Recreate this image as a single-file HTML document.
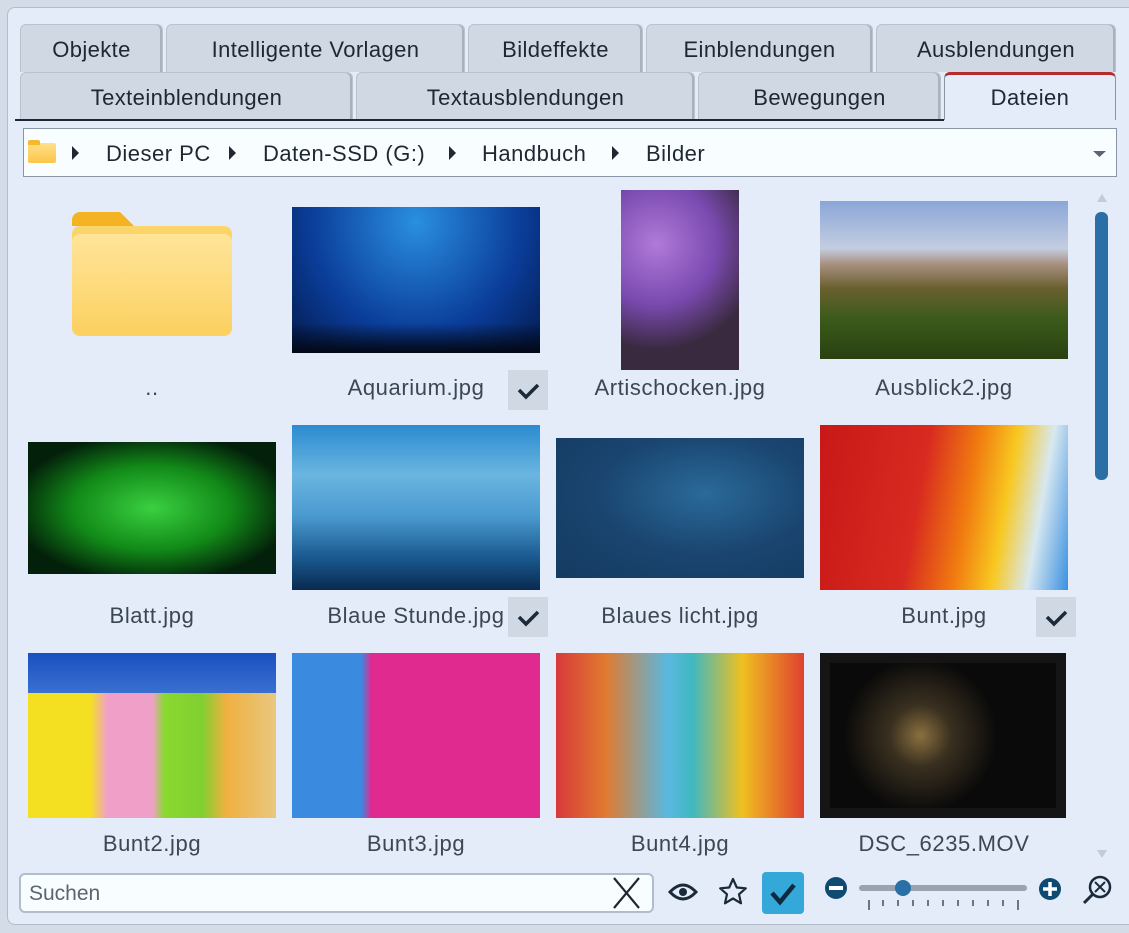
<!DOCTYPE html>
<html><head><meta charset="utf-8"><style>
*{margin:0;padding:0;box-sizing:border-box}
body{width:1129px;height:933px;background:#d3dce7;position:relative;overflow:hidden;font-family:"Liberation Sans","DejaVu Sans",sans-serif;color:#1f2733}
.abs{position:absolute}
#panel{left:7px;top:7px;width:1130px;height:918px;background:#e3ecf8;border:1px solid #b3bcc8;border-radius:8px}
.tab{position:absolute;background:#cfd8e3;border:1px solid #b9c2cd;border-bottom:none;border-radius:6px 6px 0 0;font-size:22px;letter-spacing:0.4px;text-align:center;line-height:50px;height:48px;color:#1f2733;box-shadow:inset -2px 0 0 #a8b1bc}
.lbl{position:absolute;font-size:22px;letter-spacing:0.6px;color:#3c4654;text-align:center;width:264px}
.img{position:absolute}
.badge{position:absolute;width:40px;height:40px;background:#cfd8e3}
</style></head><body>
<div id="panel" class="abs"></div>
<div class="tab" style="left:20px;top:24px;width:143px">Objekte</div>
<div class="tab" style="left:166px;top:24px;width:299px">Intelligente Vorlagen</div>
<div class="tab" style="left:468px;top:24px;width:175px">Bildeffekte</div>
<div class="tab" style="left:646px;top:24px;width:227px">Einblendungen</div>
<div class="tab" style="left:876px;top:24px;width:240px">Ausblendungen</div>
<div class="tab" style="left:20px;top:72px;width:333px">Texteinblendungen</div>
<div class="tab" style="left:356px;top:72px;width:339px">Textausblendungen</div>
<div class="tab" style="left:698px;top:72px;width:243px">Bewegungen</div>
<div class="tab" style="left:944px;top:72px;width:172px;background:#e3ecf8;border-top:3px solid #b62b2b;line-height:46px;box-shadow:none;border-color:#8a96a4;border-top-color:#b62b2b">Dateien</div>
<div class="abs" style="left:15px;top:119px;width:929px;height:2px;background:#1f2733"></div>
<div class="abs" style="left:23px;top:128px;width:1094px;height:49px;background:#f8fdff;border:1px solid #8a96a4"></div>
<div class="abs" style="left:28px;top:143px;width:28px;height:20px;background:linear-gradient(#ffe08a,#fbc64a);border-radius:2px"></div>
<div class="abs" style="left:28px;top:140px;width:12px;height:5px;background:#f5b92b;border-radius:2px 2px 0 0"></div>
<svg class="abs" style="left:0;top:128px" width="1129" height="50">
<g fill="#1f2733"><path d="M72 18l7 7-7 7z"/><path d="M229 18l7 7-7 7z"/><path d="M449 18l7 7-7 7z"/><path d="M612 18l7 7-7 7z"/><path d="M1093 23h13l-6.5 6z" fill="#5a6472"/></g>
<g font-size="22" fill="#1f2733" font-family="Liberation Sans,sans-serif" letter-spacing="0.5"><text x="106" y="33">Dieser PC</text><text x="263" y="33">Daten-SSD (G:)</text><text x="482" y="33">Handbuch</text><text x="646" y="33">Bilder</text></g>
</svg>
<svg class="abs" style="left:1090px;top:186px" width="24" height="680"><path d="M7 16l5-8 5 8z" fill="#c3cbd5"/><rect x="5" y="26" width="13" height="268" rx="6" fill="#2a6fa5"/><path d="M7 664l5 8 5-8z" fill="#c3cbd5"/></svg>
<svg class="abs" style="left:72px;top:212px" width="160" height="126"><defs><linearGradient id="fg" x1="0" y1="0" x2="0" y2="1"><stop offset="0" stop-color="#ffe59a"/><stop offset="1" stop-color="#fcd060"/></linearGradient></defs><path d="M0 8a8 8 0 0 1 8-8h40l14 14H0z" fill="#f4b322"/><rect x="0" y="14" width="160" height="110" rx="8" fill="#fcd56a"/><rect x="0" y="22" width="160" height="102" rx="8" fill="url(#fg)"/></svg>
<div class="img" style="left:292px;top:207px;width:248px;height:146px;background:radial-gradient(ellipse at 50% 10%,#2a8fe0,#0a3d9a 60%,#041a4a);"><div style="position:absolute;bottom:0;left:0;right:0;height:30px;background:linear-gradient(transparent,#020816)"></div></div>
<div class="img" style="left:621px;top:190px;width:118px;height:180px;background:radial-gradient(circle at 30% 30%,#b07ad8,#7a4ab0 40%,#3a2a40 70%),#9a6a40"></div>
<div class="img" style="left:820px;top:201px;width:248px;height:158px;background:linear-gradient(#8aa6d8 0%,#c4cde0 30%,#a89080 40%,#6a6030 55%,#3a5a1a 75%,#2a4010)"></div>
<div class="img" style="left:28px;top:442px;width:248px;height:132px;background:radial-gradient(ellipse at 50% 50%,#3ad040,#128a18 45%,#03200a 80%)"></div>
<div class="img" style="left:292px;top:425px;width:248px;height:165px;background:linear-gradient(#2b8bd0,#6ab5e0 30%,#4a9ad0 55%,#1a5a90 80%,#0a2a50)"></div>
<div class="img" style="left:556px;top:438px;width:248px;height:140px;background:radial-gradient(ellipse at 60% 40%,#2a6a9a,#1a4570 50%,#143a60)"></div>
<div class="img" style="left:820px;top:425px;width:248px;height:165px;background:linear-gradient(100deg,#c81818 0%,#d82a20 40%,#f07a10 58%,#f8c820 72%,#d8e8f0 85%,#3a90e0)"></div>
<div class="img" style="left:28px;top:653px;width:248px;height:165px;background:linear-gradient(90deg,#f4e020 0%,#f4e020 25%,#f0a0c8 32%,#f0a0c8 50%,#8ad830 55%,#80d030 70%,#f0b040 80%,#e8c880);"><div style="position:absolute;top:0;left:0;right:0;height:40px;background:linear-gradient(#1a50c0,#3a70d0)"></div></div>
<div class="img" style="left:292px;top:653px;width:248px;height:165px;background:linear-gradient(90deg,#3a8ae0 0%,#3a8ae0 28%,#e02a90 32%,#e02a90 100%)"></div>
<div class="img" style="left:556px;top:653px;width:248px;height:165px;background:linear-gradient(90deg,#d83a3a 0%,#e07a30 20%,#5ab8e0 45%,#40b8c0 55%,#f0c020 75%,#e04030)"></div>
<div class="img" style="left:820px;top:653px;width:246px;height:165px;background:#0a0a0a;border:10px solid #151515"><div style="position:absolute;inset:0;background:radial-gradient(circle at 40% 50%,#8a7040 0,#3a3020 20%,#0a0a0a 50%)"></div></div>
<div class="lbl" style="left:20px;top:375px">..</div>
<div class="lbl" style="left:284px;top:375px">Aquarium.jpg</div>
<div class="lbl" style="left:548px;top:375px">Artischocken.jpg</div>
<div class="lbl" style="left:812px;top:375px">Ausblick2.jpg</div>
<div class="lbl" style="left:20px;top:603px">Blatt.jpg</div>
<div class="lbl" style="left:284px;top:603px">Blaue Stunde.jpg</div>
<div class="lbl" style="left:548px;top:603px">Blaues licht.jpg</div>
<div class="lbl" style="left:812px;top:603px">Bunt.jpg</div>
<div class="lbl" style="left:20px;top:831px">Bunt2.jpg</div>
<div class="lbl" style="left:284px;top:831px">Bunt3.jpg</div>
<div class="lbl" style="left:548px;top:831px">Bunt4.jpg</div>
<div class="lbl" style="left:812px;top:831px">DSC_6235.MOV</div>
<div class="badge" style="left:508px;top:370px"><svg width="40" height="40"><path d="M11 20l7 7 12-12" stroke="#1b2a3a" stroke-width="3.5" fill="none"/></svg></div>
<div class="badge" style="left:508px;top:597px"><svg width="40" height="40"><path d="M11 20l7 7 12-12" stroke="#1b2a3a" stroke-width="3.5" fill="none"/></svg></div>
<div class="badge" style="left:1036px;top:597px"><svg width="40" height="40"><path d="M11 20l7 7 12-12" stroke="#1b2a3a" stroke-width="3.5" fill="none"/></svg></div>
<div class="abs" style="left:19px;top:873px;width:635px;height:40px;background:#f8fdff;border:2px solid #b3bcc8;border-radius:6px;font-size:21px;color:#5a6472;padding:7px 0 0 8px">Suchen</div>
<svg class="abs" style="left:0;top:860px" width="1129" height="70">
<path d="M614 18l25 30M639 18l-25 30" stroke="#1f2733" stroke-width="2.2"/>
<path d="M670 32q13-14 26 0q-13 14-26 0z" fill="none" stroke="#1b2a3a" stroke-width="3"/><circle cx="683" cy="32" r="4" fill="#1b2a3a"/>
<path d="M733 19l3.8 8.5 9 .8-6.8 6 2 9-8-4.8-8 4.8 2-9-6.8-6 9-.8z" fill="none" stroke="#1b2a3a" stroke-width="2.2" stroke-linejoin="round"/>
<rect x="762" y="12" width="42" height="42" rx="4" fill="#34a8d8"/>
<path d="M772 33l8 9 14-17" stroke="#0f2a40" stroke-width="4.5" fill="none"/>
<circle cx="836" cy="28" r="11" fill="#0f4a72"/><rect x="829" y="26" width="14" height="4" fill="#fff"/>
<rect x="859" y="25" width="168" height="6" rx="3" fill="#9aa3ae"/><circle cx="903" cy="28" r="8" fill="#2a6fa5"/>
<g stroke="#1f2733" stroke-width="1.2"><path d="M869 40v10M883 40v6M898 40v6M913 40v6M928 40v6M943 40v6M958 40v6M973 40v6M988 40v6M1003 40v6M1018 40v10"/></g>
<circle cx="1050" cy="29" r="11" fill="#0f4a72"/><path d="M1043 29h14M1050 22v14" stroke="#fff" stroke-width="3.5"/>
<circle cx="1100" cy="27" r="10" fill="none" stroke="#1b2a3a" stroke-width="2.5"/><path d="M1093 34l-9 9" stroke="#1b2a3a" stroke-width="3"/><path d="M1095 22l10 10M1105 22l-10 10" stroke="#1b2a3a" stroke-width="2"/>
</svg>
</body></html>
